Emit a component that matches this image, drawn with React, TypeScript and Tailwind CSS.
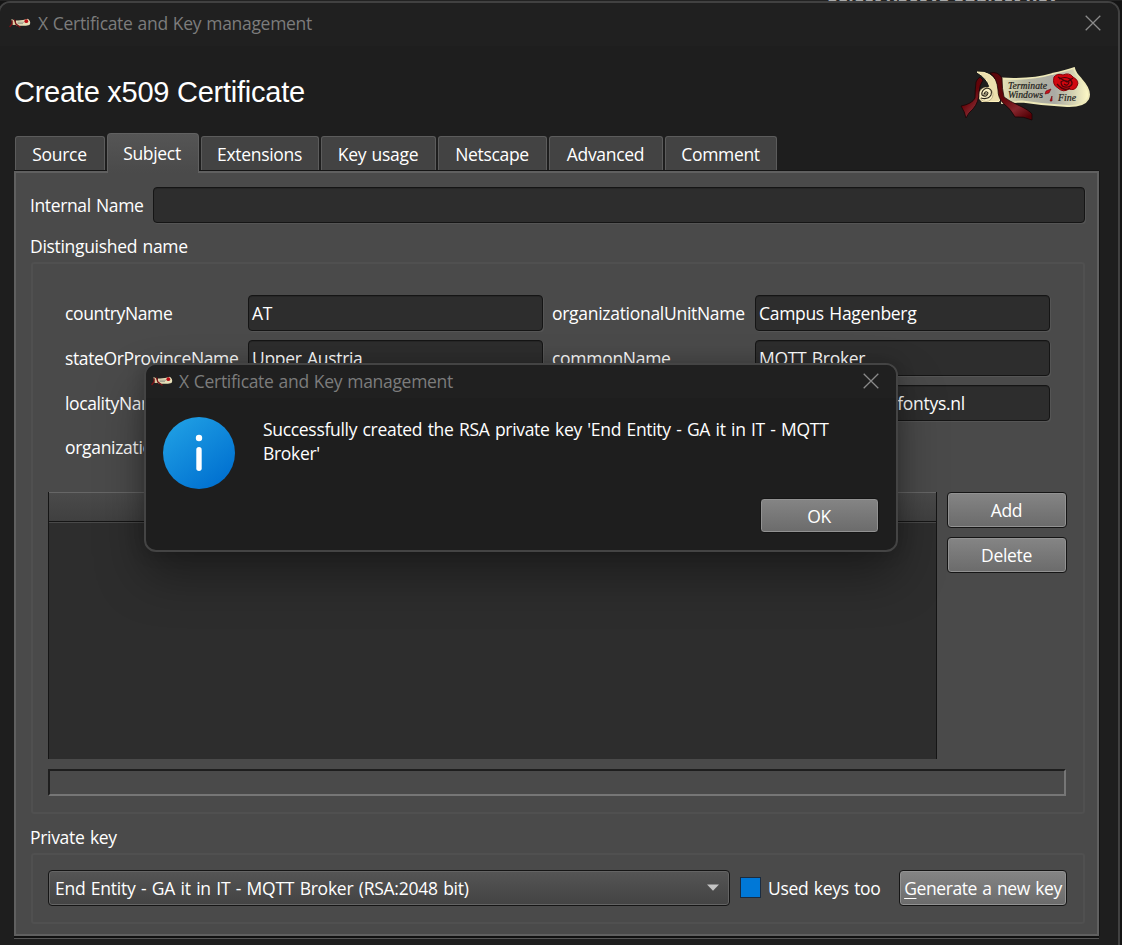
import React from "react";

const field =
  "h-9 shrink-0 rounded-[4px] border border-[#151515] bg-[#2d2d2d] shadow-[inset_0_1px_0_#262626,1px_1px_0_#555] flex items-center whitespace-nowrap overflow-hidden pb-px";
const button =
  "shrink-0 rounded-[4px] border border-[#151515] bg-linear-to-b from-[#858585] to-[#6b6b6b] shadow-[inset_0_0_0_1px_#929292] flex items-center justify-center whitespace-nowrap";
const groupBox = "rounded-[3px] border-2 border-[#505050]";

function Scroll({ className }: { className: string }) {
  return (
    <svg className={className} viewBox="0 0 130 54" preserveAspectRatio="none">
      <defs>
        <linearGradient id="paper" x1="0" x2="1" y1="0" y2="0">
          <stop offset="0" stopColor="#e6e2b8" />
          <stop offset="0.25" stopColor="#b9b9a2" />
          <stop offset="0.6" stopColor="#aaaaa4" />
          <stop offset="0.82" stopColor="#d5d3b3" />
          <stop offset="1" stopColor="#fffac6" />
        </linearGradient>
        <linearGradient id="ribbon" x1="0.2" x2="0.8" y1="0" y2="1">
          <stop offset="0" stopColor="#5c060b" />
          <stop offset="0.45" stopColor="#640409" />
          <stop offset="0.75" stopColor="#84262d" />
          <stop offset="1" stopColor="#560005" />
        </linearGradient>
      </defs>
      <path
        d="M42 11.5 Q72 13 92 7 Q105 4 114 1 Q115 6 121 12 Q132 24 128 32 Q124 39.5 107 39 Q84 38 62 34.5 L42 36 Z"
        fill="url(#paper)"
        stroke="#eee9b9"
        strokeWidth="1.8"
      />
      <path
        d="M17 5 Q32 4 38 18 Q43 29 39 34.5 L22 34.5 Q18 32 20 25 Q24 20 30 20 Q27 11 17 5Z"
        fill="#ecdfae"
        stroke="#fff3bd"
        strokeWidth="1"
      />
      <circle cx="26" cy="27.5" r="7" fill="#f8eec3" stroke="#ac9d75" strokeWidth="0.7" />
      <path
        d="M21 31 Q28 33 31 28 Q33 22 27 21 Q21 23 22 28 Q27 31 28 26 Q26 23 24 27 H27"
        fill="none"
        stroke="#292218"
        strokeWidth="1.1"
      />
      <path
        d="M20 10 L23 13 Q19.5 18 19 25 Q19 35 13 42 Q8 46 6 51 Q5 45 1 39 Q12 37 15 31 Q15 23 16 15 Q17 12 20 10Z"
        fill="url(#ribbon)"
        stroke="#190405"
        strokeWidth="0.8"
      />
      <path
        d="M30 6 Q38 4 42 11 Q42 22 44 30 Q49 34 58 38 Q69 43 72 47 L72 53 Q63 49 55 50 Q51 42 43 36 Q38 31 38 23 Q37 11 30 6Z"
        fill="url(#ribbon)"
        stroke="#190405"
        strokeWidth="0.8"
      />
      <path
        d="M94 10 Q97 6 103 8 Q109 5 113 10 Q120 14 117 19 Q115 24 109 22 Q103 26 98 21 Q92 18 94 10Z"
        fill="#d1060f"
        stroke="#8a0007"
        strokeWidth="1"
      />
      <path
        d="M99 12 Q105 9 110 12 Q115 18 108 20 Q101 21 101 15 Q104 12 109 15 Q108 20 104 17 M97 17 Q104 25 110 21 M98 10 L107 15 L113 11"
        fill="none"
        stroke="#4a0409"
        strokeWidth="1.2"
      />
      <path d="M91 22 L86 24 L85 27 L89 26Z M92 29 L90 34 L92 34Z" fill="#cb101b" stroke="#6a0309" strokeWidth="0.6" />
      <g
        fill="#22201a"
        stroke="#22201a"
        strokeWidth="0.2"
        fontFamily="'Liberation Serif', serif"
        fontStyle="italic"
        letterSpacing="0"
        wordSpacing="0"
      >
        <text x="48" y="21.5" fontSize="9.5" textLength="39" lengthAdjust="spacingAndGlyphs">
          Terminate
        </text>
        <text x="48" y="30.5" fontSize="9.5" textLength="35" lengthAdjust="spacingAndGlyphs">
          Windows
        </text>
        <text x="98" y="34" fontSize="10" textLength="18" lengthAdjust="spacingAndGlyphs">
          Fine
        </text>
      </g>
    </svg>
  );
}

function SmallScroll() {
  return (
    <svg className="h-[11px] w-[22px] shrink-0" viewBox="0 0 22 11">
      <path d="M7 2.5 Q13 3 19 .8 Q22.5 4 20.5 7 Q14 8.6 7 7.2Z" fill="#e6dfb8" />
      <path d="M8.5 4.2 H15 M8.5 5.6 H14" stroke="#99988a" strokeWidth="0.9" />
      <path d="M2.4 1 L6 2.5 L7 7 H3.6Z" fill="#d9caa0" />
      <path d="M3.2 2.4 L3 6 L.6 9 M5.4 1.5 L7 6 L11.5 9.6" fill="none" stroke="#7b1016" strokeWidth="1.3" />
      <circle cx="17.3" cy="3.2" r="1.9" fill="#b80d15" />
    </svg>
  );
}

function Close() {
  return (
    <svg className="h-4 w-4 shrink-0" viewBox="0 0 16 16" fill="none" stroke="#8a8a8a" strokeWidth="1.3">
      <path d="M.7 .7 L15.3 15.3 M15.3 .7 L.7 15.3" />
    </svg>
  );
}

const tabs = [
  { label: "Source", box: "w-[90px]", active: false },
  { label: "Subject", box: "w-[92px]", active: true },
  { label: "Extensions", box: "w-[118px]", active: false },
  { label: "Key usage", box: "w-[115px]", active: false },
  { label: "Netscape", box: "w-[109px]", active: false },
  { label: "Advanced", box: "w-[114px]", active: false },
  { label: "Comment", box: "w-[112px]", active: false },
];

const rows = [
  ["countryName", "AT", "organizationalUnitName", "Campus Hagenberg"],
  ["stateOrProvinceName", "Upper Austria", "commonName", "MQTT Broker"],
  ["localityName", "", "emailAddress", ".fontys.nl"],
];

function MessageDialog() {
  return (
    <div className="absolute left-[144px] top-[363px] h-[189px] w-[754px] rounded-[12px] border-2 border-[#444] bg-[#1e1e1e] shadow-[0_24px_48px_rgba(0,0,0,0.36),0_0_18px_rgba(0,0,0,0.2)] overflow-clip">
      <div className="flex h-[33px] items-center bg-[#202020] pb-px pl-[5px] pr-[17px] text-[#7c7c7c]">
        <SmallScroll />
        <span className="ml-[6px] flex-1 whitespace-nowrap [word-spacing:0.8px]">X Certificate and Key management</span>
        <Close />
      </div>
      <div className="flex pl-[17px] pt-[19px]">
        <svg className="h-[72px] w-[72px] shrink-0" viewBox="0 0 72 72">
          <defs>
            <linearGradient id="info" x1="0.15" y1="0.1" x2="0.8" y2="0.95">
              <stop offset="0" stopColor="#1e9de3" />
              <stop offset="1" stopColor="#0070d0" />
            </linearGradient>
          </defs>
          <circle cx="36" cy="36" r="36" fill="url(#info)" />
          <circle cx="36" cy="21" r="3.2" fill="#fff" />
          <rect x="33.3" y="30" width="5.4" height="24" rx="2.7" fill="#fff" />
        </svg>
        <p className="ml-[28px] w-[600px] leading-6 text-white">
          Successfully created the RSA private key 'End Entity - GA it in IT - MQTT
          <br />
          Broker'
        </p>
      </div>
      <div className="mt-[9px] flex justify-end pr-[17px]">
        <div className={`${button} h-[35px] w-[119px] pr-px`}>OK</div>
      </div>
    </div>
  );
}

export default function App() {
  return (
    <div className="relative h-[945px] w-[1122px] overflow-hidden bg-[#141414] font-['Open_Sans','Noto_Sans',sans-serif] text-[17.5px] leading-6 tracking-[-0.31px] text-white [word-spacing:1.2px]">
      <div className="flex h-px justify-end overflow-visible bg-[#222] pr-[64px]">
        <div className="-mt-[17px] h-[24px] whitespace-nowrap text-[18px] font-bold tracking-normal text-[#aaa] [word-spacing:0px]">
          Select X509v3 Subject Key
        </div>
      </div>
      <div className="relative -ml-[2px] flex h-[960px] w-[1122px] flex-col overflow-hidden rounded-t-[12px] border-2 border-[#414141] bg-[#1e1e1e]">
        <div className="flex h-[43px] shrink-0 items-center bg-[#202020] pb-[3px] pl-[9px] pr-[17px] text-[#7c7c7c]">
          <SmallScroll />
          <span className="ml-[7px] flex-1 whitespace-nowrap [word-spacing:0.8px]">X Certificate and Key management</span>
          <Close />
        </div>
        <div className="flex h-[87px] shrink-0 justify-between pl-[14px] pr-[28px]">
          <h1 className="mt-[30px] h-8 whitespace-nowrap font-['Liberation_Sans',sans-serif] text-[29px] leading-8 tracking-[-0.25px] [word-spacing:0px]">
            Create x509 Certificate
          </h1>
          <Scroll className="mt-[21px] h-[54px] w-[130px]" />
        </div>
        <div className="relative z-10 flex h-[38px] shrink-0 items-end gap-[2px] pl-[15px]">
          {tabs.map((t) =>
            t.active ? (
              <div
                key={t.label}
                className={`${t.box} -mb-[2px] flex h-10 shrink-0 items-center justify-center rounded-t-[4px] border-x border-t border-[#616161] bg-linear-to-b from-[#555] to-[#4a4a4a] pb-px pr-[2px]`}
              >
                {t.label}
              </div>
            ) : (
              <div
                key={t.label}
                className={`${t.box} mb-px flex h-[34px] shrink-0 items-center justify-center rounded-t-[3px] border-x border-t border-[#5c5c5c] bg-[#434343] pr-px`}
              >
                {t.label}
              </div>
            ),
          )}
        </div>
        <div className="ml-[14px] flex h-[765px] w-[1085px] shrink-0 flex-col border-2 border-[#606060] bg-[#4a4a4a] pl-[14px] pr-[12px] pt-[14px] shadow-[0_-1px_0_#151515,1px_0_0_#151515,0_2px_0_#111,0_3px_0_#555]">
          <div className="flex shrink-0 items-center justify-between">
            <span className="pb-px tracking-[-0.38px]">Internal Name</span>
            <div className={`${field} w-[932px]`} />
          </div>
          <div className="mt-[11px] h-6 shrink-0">Distinguished name</div>
          <div className={`${groupBox} ml-px mt-1 flex h-[552px] w-[1054px] shrink-0 flex-col pl-[15px] pt-[31px]`}>
            <div className="ml-[17px] grid grid-cols-[183px_295px_212px_295px] gap-y-[9px]">
              {rows.map(([a, av, b, bv]) => (
                <React.Fragment key={a}>
                  <span className="self-center pb-px tracking-[-0.37px]">{a}</span>
                  <div className={`${field} pl-[3px]`}>{av}</div>
                  <span className="self-center pb-px pl-[9px] tracking-[-0.29px]">{b}</span>
                  <div className={`${field} ${bv === ".fontys.nl" ? "pl-[137px]" : "pl-[3px]"}`}>{bv}</div>
                </React.Fragment>
              ))}
              <span className="h-9 leading-[35px]">organizationName</span>
            </div>
            <div className="mt-[26px] flex gap-[10px]">
              <div className="h-[267px] w-[889px] shrink-0 border-x border-[#151515] bg-[#2d2d2d]">
                <div className="h-[30px] border-b border-t border-b-[#151515] border-t-[#666] bg-linear-to-b from-[#4a4a4a] to-[#404040] shadow-[0_1px_0_#494949]" />
              </div>
              <div className="flex flex-col gap-[9px]">
                <div className={`${button} h-9 w-[120px] pb-px pr-px`}>Add</div>
                <div className={`${button} h-9 w-[120px] pb-px pr-px`}>Delete</div>
              </div>
            </div>
            <div className="mt-[10px] h-[27px] w-[1018px] shrink-0 border-2 border-b-[#767676] border-l-[#1e1e1e] border-r-[#767676] border-t-[#1e1e1e]" />
          </div>
          <div className="mt-[11px] h-6 shrink-0">Private key</div>
          <div className={`${groupBox} ml-px mt-1 flex h-[71px] w-[1054px] shrink-0 items-start pl-[15px] pt-[15px]`}>
            <div className="flex h-9 w-[682px] shrink-0 items-center justify-between rounded-[4px] border border-[#151515] bg-linear-to-b from-[#555] to-[#434343] pb-px pl-[6px] pr-[10px] shadow-[inset_0_0_0_1px_#646464]">
              <span className="tracking-[-0.26px]">End Entity - GA it in IT - MQTT Broker (RSA:2048 bit)</span>
              <svg className="h-[7px] w-3" viewBox="0 0 12 7">
                <path d="M0 .5 H12 L6 6.8Z" fill="#c4c4c4" />
              </svg>
            </div>
            <div className="ml-[10px] mt-[7px] h-[21px] w-[21px] shrink-0 border border-[#1a2b40] bg-[#0078d7]" />
            <span className="ml-[7px] mt-[6px] w-[131px] shrink-0">Used keys too</span>
            <div className={`${button} h-9 w-[168px] pb-px tracking-[-0.4px]`}>
              <span className="underline decoration-1 underline-offset-[3px]">G</span>enerate a new key
            </div>
          </div>
        </div>
      </div>
      <MessageDialog />
    </div>
  );
}
